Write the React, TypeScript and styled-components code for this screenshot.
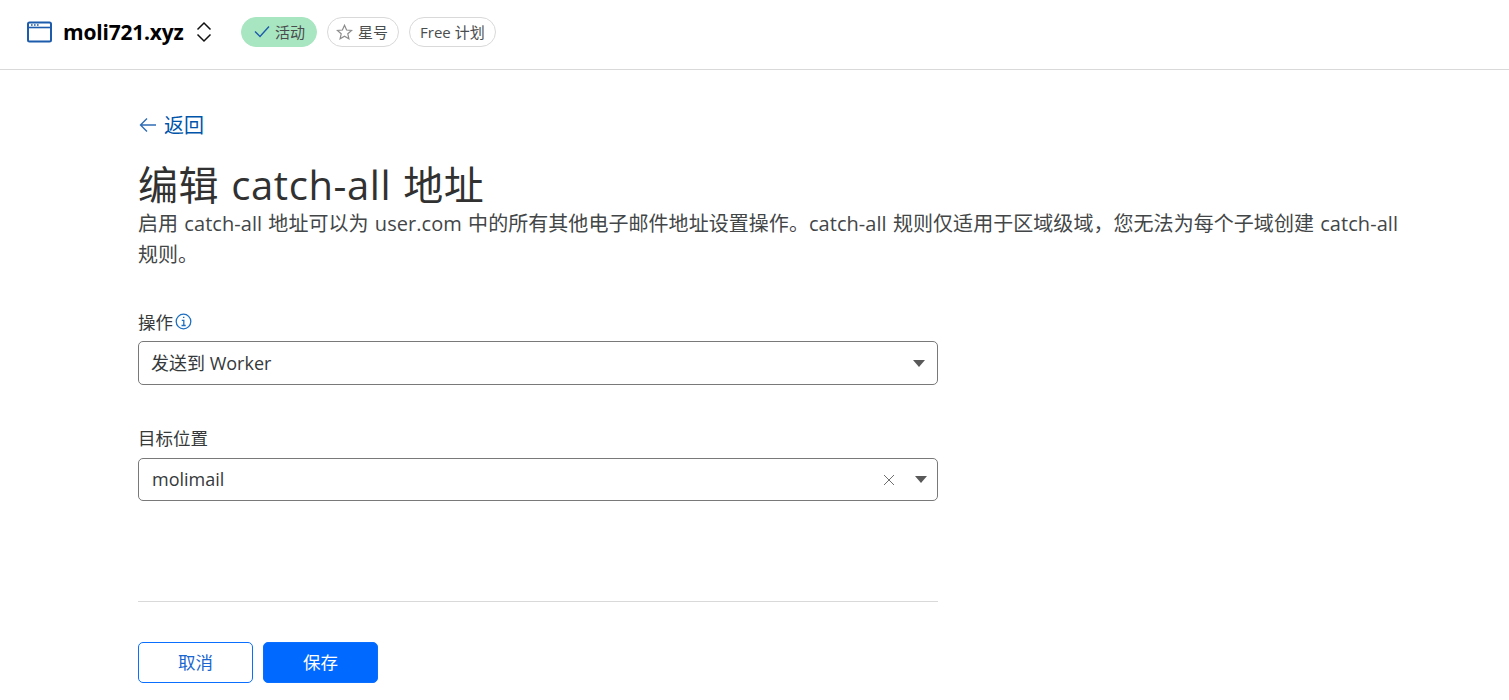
import React from "react";
import styled, { createGlobalStyle } from "styled-components";

const Global = createGlobalStyle`
  html, body { margin: 0; padding: 0; background: #fff; overflow: hidden; }
  body { font-family: "Open Sans", "Noto Sans CJK SC", sans-serif; color: #36393a; }
`;
const Page = styled.div`
  width: 1509px;
  height: 700px;
  overflow: hidden;
`;
const Header = styled.header`
  height: 63px;
  padding-bottom: 6px;
  border-bottom: 1px solid #d9d9d9;
  display: flex;
  align-items: center;
  padding-left: 27px;
`;
const Domain = styled.span`
  font-size: 21px;
  font-weight: 700;
  color: #000;
  margin-left: 11px;
  width: 121px;
  white-space: nowrap;
  letter-spacing: -0.2px;
`;
const Chevrons = styled.svg`
  margin-left: 12px;
`;
const Pills = styled.div`
  display: flex;
  gap: 10px;
  margin-left: 29px;
`;
const Pill = styled.span<{ $active?: boolean }>`
  height: 30px;
  box-sizing: border-box;
  border-radius: 15px;
  display: inline-flex;
  align-items: center;
  gap: 5px;
  padding: 0 ${(p) => (p.$active ? 11 : 10)}px 0 ${(p) => (p.$active ? 12 : 8)}px;
  font-size: 15px;
  color: #4a4d4e;
  background: ${(p) => (p.$active ? "#a8e6c1" : "#fff")};
  border: 1px solid ${(p) => (p.$active ? "#a8e6c1" : "#d9d9d9")};
`;
const PlainPill = styled(Pill)`
  padding: 0 10px;
`;
const Main = styled.main`
  padding: 40px 0 0 138px;
`;
const Back = styled.a`
  display: flex;
  align-items: center;
  gap: 7px;
  height: 28px;
  font-size: 20px;
  color: #0055aa;
`;
const BackArrow = styled.svg`
  margin: 2px 0 0 1px;
`;
const Title = styled.h1`
  margin: 23px 0 0;
  font-size: 40px;
  line-height: 47px;
  font-weight: 400;
  color: #313131;
  letter-spacing: 0.6px;
  word-spacing: 1px;
`;
const Desc = styled.p`
  margin: 0;
  width: 1275px;
  font-size: 20px;
  line-height: 31px;
  letter-spacing: 0.05px;
  word-spacing: 1px;
  color: #434647;
`;
const Form = styled.div`
  width: 800px;
`;
const Field = styled.div<{ $top: number }>`
  margin-top: ${(p) => p.$top}px;
`;
const Label = styled.label<{ $gap: number }>`
  display: flex;
  align-items: center;
  gap: 2px;
  height: 26px;
  font-size: 17.5px;
  margin-bottom: ${(p) => p.$gap}px;
  color: #36393a;
`;
const Select = styled.div<{ $h: number; $right: number }>`
  height: ${(p) => p.$h}px;
  box-sizing: border-box;
  border: 1px solid #797979;
  border-radius: 5px;
  display: flex;
  align-items: center;
  padding: 0 ${(p) => p.$right}px 0 12px;
  font-size: 18px;
  color: #36393a;
`;
const Value = styled.span<{ $indent?: number }>`
  flex: 1;
  padding: 0 0 2px ${(p) => p.$indent ?? 0}px;
`;
const Caret = styled.i`
  width: 0;
  height: 0;
  border-left: 6px solid transparent;
  border-right: 6px solid transparent;
  border-top: 7px solid #595959;
`;
const Clear = styled.svg`
  margin-right: 20px;
`;
const Rule = styled.hr`
  margin: 100px 0 40px;
  border: 0;
  border-top: 1px solid #d9d9d9;
`;
const Actions = styled.div`
  display: flex;
  gap: 10px;
`;
const Button = styled.button<{ $primary?: boolean }>`
  width: 115px;
  height: 41px;
  padding: 0 0 2px;
  border-radius: 5px;
  font: inherit;
  font-size: 17.5px;
  border: 1px solid #0a6eff;
  background: ${(p) => (p.$primary ? "#0069ff" : "#fff")};
  color: ${(p) => (p.$primary ? "#fff" : "#1a66d0")};
`;

export default function App() {
  return (
    <Page>
      <Global />
      <Header>
        <svg width="25" height="22" viewBox="0 0 25 22" fill="none">
          <rect x="1" y="1.5" width="23" height="19" rx="1.5" stroke="#1d5bac" strokeWidth="2" />
          <path d="M1 6.5h23" stroke="#1d5bac" strokeWidth="1.6" />
          <path d="M4 4h1.6M7 4h1.6M10 4h1.6" stroke="#1d5bac" strokeWidth="1.3" />
        </svg>
        <Domain>moli721.xyz</Domain>
        <Chevrons width="16" height="22" viewBox="0 0 16 22" fill="none" stroke="#111" strokeWidth="1.5">
          <path d="M1.5 8.5 8 2l6.5 6.5M1.5 13.5 8 20l6.5-6.5" />
        </Chevrons>
        <Pills>
          <Pill $active>
            <svg width="16" height="13" viewBox="0 0 16 13" fill="none" stroke="#1d5bac" strokeWidth="1.4">
              <path d="M1 6.5 6 11.5 15 1.5" />
            </svg>
            活动
          </Pill>
          <Pill>
            <svg width="17" height="16" viewBox="0 0 17 16" fill="none" stroke="#8c8c8c" strokeWidth="1.2">
              <path d="M8.5 1.3 10.6 6l5 .5-3.8 3.3 1.1 5-4.4-2.6-4.4 2.6 1.1-5L1.4 6.5l5-.5z" />
            </svg>
            星号
          </Pill>
          <PlainPill>Free 计划</PlainPill>
        </Pills>
      </Header>
      <Main>
        <Back>
          <BackArrow width="18" height="16" viewBox="0 0 18 16" fill="none" stroke="#2f6cb5" strokeWidth="1.4">
            <path d="M8 1.5 1.5 8 8 14.5M1.5 8H17" />
          </BackArrow>
          返回
        </Back>
        <Title>编辑 catch-all 地址</Title>
        <Desc>
          启用 catch-all 地址可以为 user.com 中的所有其他电子邮件地址设置操作。catch-all 规则仅适用于区域级域，您无法为每个子域创建 catch-all 规则。
        </Desc>
        <Form>
          <Field $top={38}>
            <Label $gap={7}>
              操作
              <svg width="17" height="17" viewBox="0 0 17 17" fill="none" stroke="#1d6fc0">
                <circle cx="8.5" cy="8.5" r="7.3" strokeWidth="1.3" />
                <path d="M6.8 7.3h2v5M6.5 12.5h4.2M8 4.3h1.4" strokeWidth="1.3" />
              </svg>
            </Label>
            <Select $h={44} $right={12}>
              <Value>发送到 Worker</Value>
              <Caret />
            </Select>
          </Field>
          <Field $top={39}>
            <Label $gap={8}>目标位置</Label>
            <Select $h={43} $right={10}>
              <Value $indent={1}>molimail</Value>
              <Clear width="12" height="12" viewBox="0 0 12 12" fill="none" stroke="#6f6f6f" strokeWidth="1">
                <path d="M1 1l10 10M11 1 1 11" />
              </Clear>
              <Caret />
            </Select>
          </Field>
          <Rule />
          <Actions>
            <Button>取消</Button>
            <Button $primary>保存</Button>
          </Actions>
        </Form>
      </Main>
    </Page>
  );
}
